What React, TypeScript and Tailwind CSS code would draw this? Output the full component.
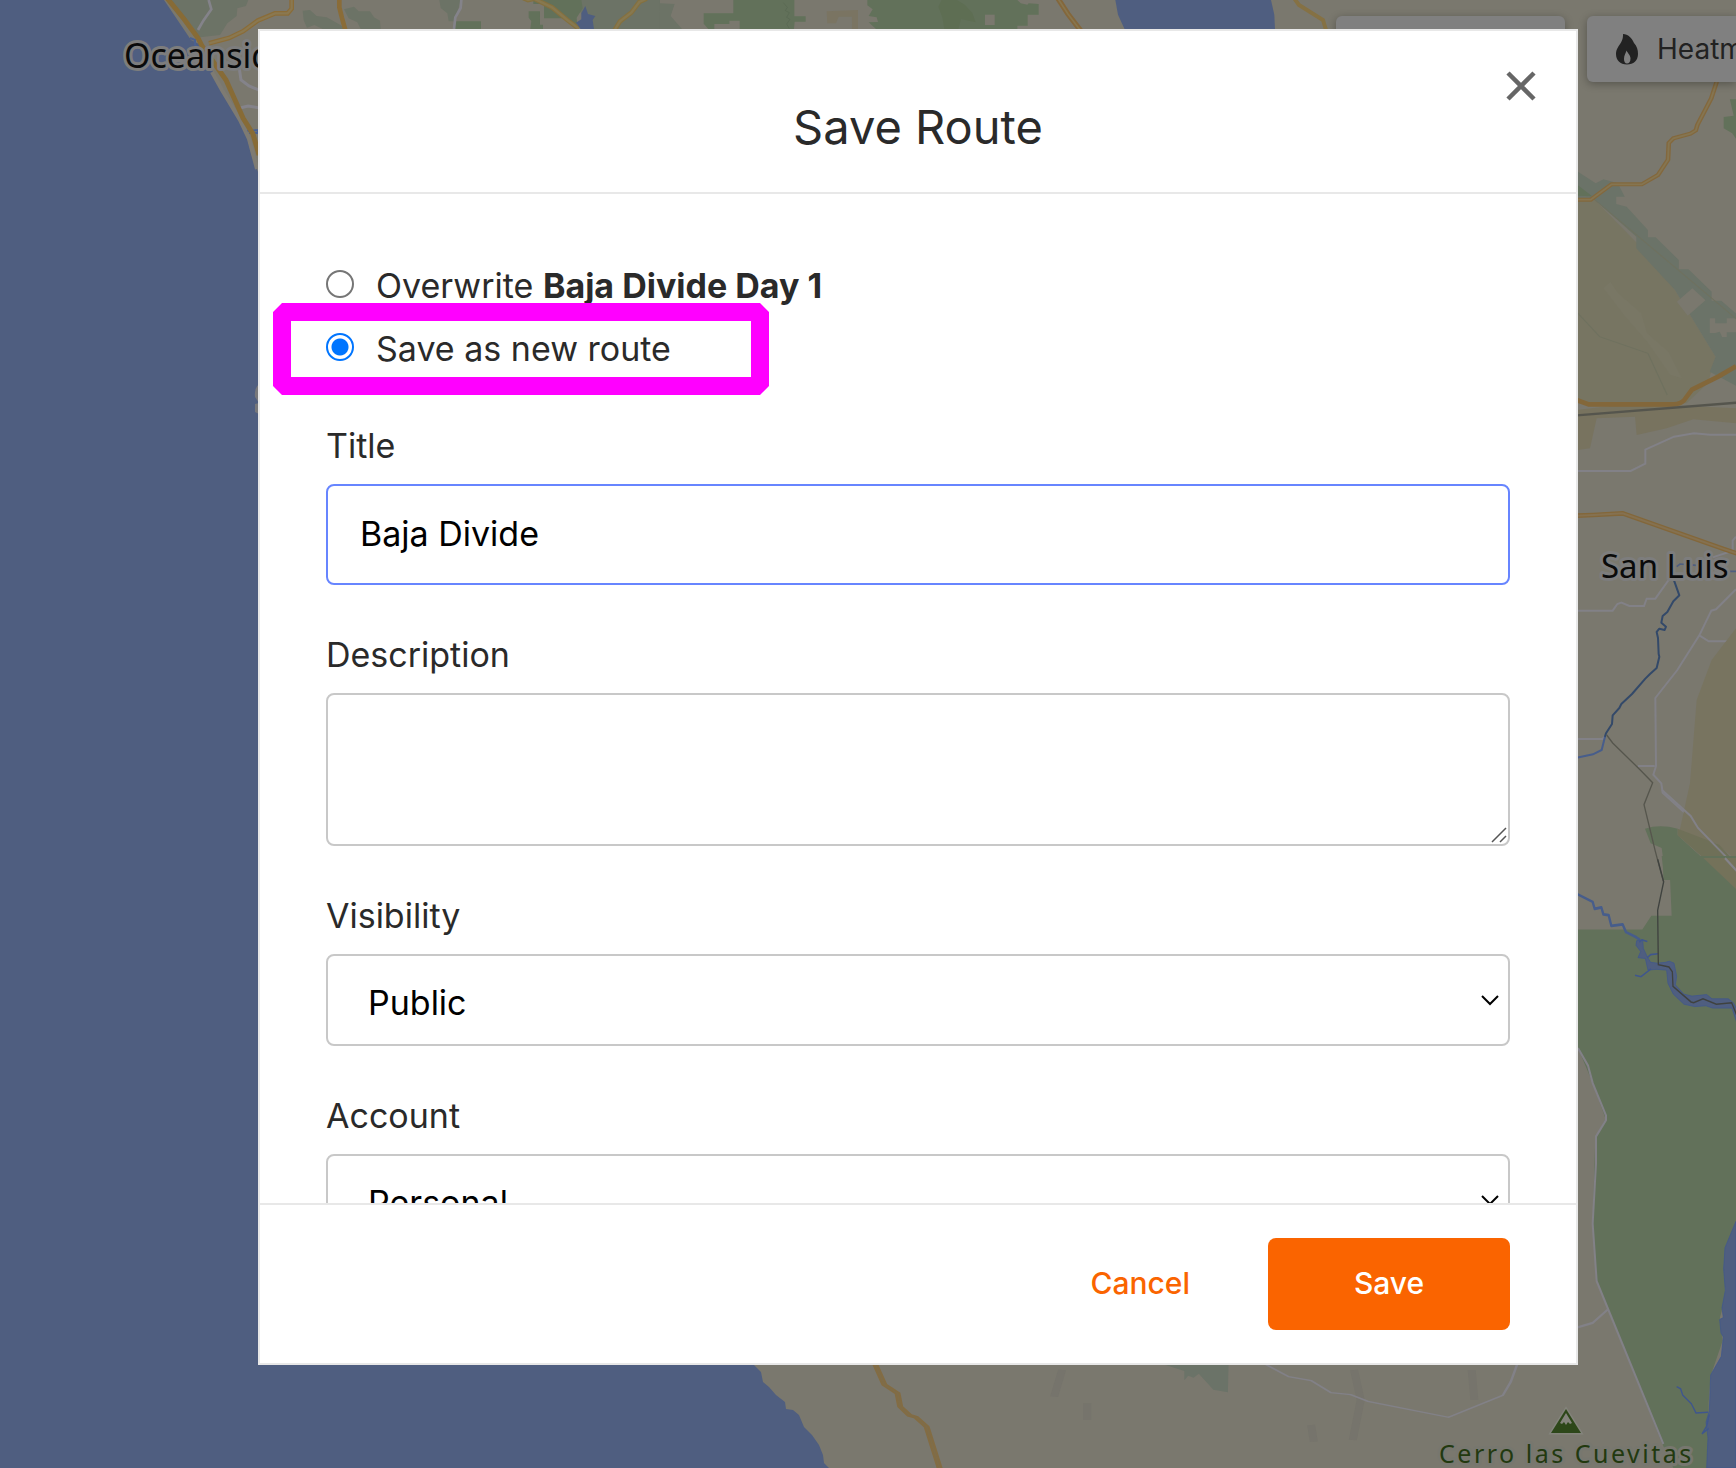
import { useState } from 'react';
import type { ReactNode } from 'react';

const fieldClass =
  'block w-full rounded-lg border-2 border-[#c8c8c8] bg-white text-[34px] leading-10 text-black outline-none';

const radioClass =
  'mb-1 size-7 appearance-none rounded-full border-2 border-[#767676] bg-white checked:border-[#0075ff] checked:bg-[radial-gradient(circle,#0075ff_8px,#fff_9px)]';

function MapBackground() {
  return (
    <svg
      className="absolute inset-0 h-full w-full"
      viewBox="0 0 1736 1468"
      preserveAspectRatio="xMidYMid slice"
      fill="none"
      aria-hidden="true"
    >
      <rect width="1736" height="1468" fill="#7a786e" />

      {/* Northern hills and forests */}
      <g transform="scale(.33333) translate(420 0)">
        <path d="M90 0H325L318 18L292 25L290 48L262 70L240 105L180 112L150 70Z" fill="#6c7366" />
        <path d="M488 32l22-2 20 18 30 4 40 22 18 13h-70l-25-12-22 8-10-22zM612 28l30-8 14 14 34 0 12 18 18 10 2 25h-60l-10-20-26-12z" fill="#6c7366" />
        <path d="M898 0h64l-6 24-14 40h-16l-4-24-20-16zM1320 0h240v87h-200l-40-52z" fill="#6c7366" />
        <path d="M945 64H1023V87H945ZM1166 34h34v40h9v13h-38l3-24-8-10zM1180 0h144l4 25-18 28 2 30-12-2-26-26h-62V12h-32z" fill="#62715a" />
        <path d="M206 0l8 28-24 34-16 28M964 0l-2 24-16 28-4 35" stroke="#84838a" strokeWidth="8" />
        <path d="M455 0v26l-12 14h-38l-52 22-44 32-42 20-60 16" stroke="#8a6c38" strokeWidth="14" />
        <path d="M455 0v26l-12 14h-38l-52 22-44 32-42 20-60 16" stroke="#8a7850" strokeWidth="7" />
        <path d="M1150-6l14 6 18-4 54 26 46 38 34 26M1520-4l-22 10-24 32-34 26-16 26" stroke="#84703f" strokeWidth="14" />
        <path d="M1150-6l14 6 18-4 54 26 46 38 34 26M1520-4l-22 10-24 32-34 26-16 26" stroke="#87784f" strokeWidth="7" />
        <path d="M598-4v26l8 32 10 36" stroke="#8a6c38" strokeWidth="14" />
        <path d="M1308 68l16-10 0-18 12-22 8 24 22 6-8 12 4 27h-40z" fill="#4f5e80" />
      </g>
      <g transform="translate(660 0) scale(.33333)">
        <path d="M0 10l44 2-12 36 34 39H0z" fill="#6c7366" />
        <path d="M220 0h183v49h34v16h-33l-2 22H239V62h-31v10h-45v15h-18l-14-16V40h89zM622 0h450l10 10 20 4 4-4 30 2v32h-33v33h-31v10H648l-22-20 28-1-4-14-24-4 12-20-16-12z" fill="#62715a" />
        <path d="M370 8l12 14-6 10 12 6-8 14 10 6-10 14 8 14" stroke="#586751" strokeWidth="2" />
        <path d="M845 0l-10 20 12 32 6 35h42l8-30 44 10-10-28-22-24-24-15z" fill="#5e6e53" />
        <path d="M975 44h29v31h-29z" fill="#7a786e" />
        <path d="M500 34l94-4v57h-18V50h-40l-8 20h-26z" fill="#7a7462" />
        <path d="M1194-4l30 46 38 50" stroke="#84673b" strokeWidth="16" />
        <path d="M1194-4l30 46 38 50" stroke="#87764f" strokeWidth="5" />
        <path d="M1366 0l8 44 20 44h451l-2-44-10-44z" fill="#4f5e80" />
      </g>
      <path d="M1294-2l5 7 24 15 3 10" stroke="#857144" strokeWidth="4" />

      {/* Pacific coast */}
      <path
        d="M0 0H164L191 40L203 46L212 70L222 87L232 106L239 119L247 137L252 156L258 172V1365H754L761 1372L763 1382L769 1387L776 1395L785 1402L786 1409L793 1410L799 1415L804 1427L812 1435L819 1445L823 1455L824 1463L829 1468H0Z"
        fill="#4f5e80"
      />
      <path d="M190 38l5 2v5l4 3M247 131l11-1v3h-9" stroke="#4a6192" strokeWidth="2" />
      <path d="M212 72l10 18 18 30 9 19 8 30" stroke="#7e7b73" strokeWidth="4" />
      <path d="M238 60l3 20 8 6 10 4M240 108l8-2 12 2" stroke="#84838a" strokeWidth="3" />
      <path d="M167-2L184 19L198 38L202 46L212 60L226 80L235 100L243 118L253 134L259 155" stroke="#876b36" strokeWidth="5" />
      <path d="M259 384q-5 4-4 13l4 6M259 403l-4 1v8l4 2" fill="#77777a" />

      {/* Imperial valley */}
      <g transform="translate(1130 0) scale(.3865 .33333)">
        <path d="M1152 600L1200 597L1325 745L1410 870L1515 1070L1495 1150L1440 1210H1152Z" fill="#777562" />
        <path d="M1152 510L1205 550L1225 538L1262 550L1280 590L1258 590V612L1285 620L1340 690V712H1360L1420 780V808H1445L1505 875V902H1530L1572 945V1160L1500 1115L1515 1070L1410 870L1310 745V710L1200 597L1152 600Z" fill="#6b7368" />
        <path d="M1415 905l40-40 34 36-46 46zM1500 955h14v15h30v-15h28v42h-28v14h-12l-6-16-12 4h-14z" fill="#7a786e" />
        <path d="M1225 865l18-20 20 35 60 60 15 60 55 55 35 80-30-10-60-100-60-80z" fill="#797765" />
        <path d="M1155 935l60 75 125 50 50 125M1200 597L1572 960" stroke="#6f715f" strokeWidth="3" />
        <path d="M1158 555l38 34-38-2zM1552 298h24v132l-18-30-22-15v-34l26-4z" fill="#62715a" />
        <path d="M1518 245l-14 50-36 80-4 16-14 10-44 14-12 14-2 50-26 46-42 28h-78l-54 46h-36" stroke="#83683d" strokeWidth="12" />
        <path d="M1518 245l-14 50-36 80-4 16-14 10-44 14-12 14-2 50-26 46-42 28h-78l-54 46h-36" stroke="#857551" strokeWidth="5" />
      </g>
      <g transform="translate(1560 380) scale(.33333)">
        <path d="M50 90L220 70L528 85V130L400 118L320 145L230 165L225 110L110 115L90 205L54 210Z" fill="#78735f" />
        <path d="M50 60l36 13h256q20-2 30-12l24-32 80-40 52-30" stroke="#83673a" strokeWidth="14" />
        <path d="M50 106L530 68" stroke="#55554d" strokeWidth="7" />
        <path d="M50 273h162l44-22V209l86-39 60-10 48 4h80M50 692h108l14-20 12-4 24 10h44l8-22h26l40-56M528 628l-60 60-14 4-36 74-66 104-66 84 2 204-8 26 24 26 4 28 86 78 22 36 80 82 32 38M418 766l28 18h82M50 1077h78l8-12M234 1158h50M528 470l-10 12v30l-60 20" stroke="#828187" strokeWidth="6" />
        <path d="M528 745L455 840L410 960L390 1210L355 1370L470 1390L528 1440Z" fill="#787460" />
        <path d="M50 407l50-2 88-5 300 106 42 14" stroke="#83673a" strokeWidth="14" />
        <path d="M50 407l50-2 88-5 300 106 42 14" stroke="#857150" strokeWidth="6" />
        <path d="M255 1346Q300 1332 353 1346V1366L500 1500H310V1440L305 1404L272 1390Z" fill="#62715a" />
        <path d="M353 1346L478 1394L528 1450V1520L353 1366Z" fill="#6f7058" />
        <path d="M306 1230l86 78 22 36 80 82 40 46" stroke="#828187" strokeWidth="6" />
        <path d="M350 560l10-8 50 4M508 574h20" stroke="#4f5e80" strokeWidth="5" />
        <path d="M338 590l20 56-18 18-18 32-14 12-4 20 14 12-4 10-16-4-8 10 4 18 2 48 2 8-8 34-20 18-14 14-40 46-32 30-6 12-20 22-2 26-18 28-4 12" stroke="#334969" strokeWidth="6" strokeLinejoin="round" />
        <path d="M135 1070l-10 40-26 13-49 10" stroke="#475d8b" strokeWidth="6" />
        <path d="M140 1065l18 24 88 86 32 33-26 66 34 140 24 90" stroke="#56564d" strokeWidth="4" />
      </g>

      {/* Colorado river delta */}
      <g transform="translate(1560 860) scale(.33333 .38776)">
        <path d="M50 179H247L274 144H335L330 46L312 44L305-10H528V935L495 1000L495 1130L480 1180L488 1240L452 1330L446 1400V1568H340L306 1504L110 1086L98 940L106 714L137 668L98 575L54 485Z" fill="#62715a" />
        <path d="M430-5L528 75V-5Z" fill="#74725a" />
        <path d="M495-5l40 38" stroke="#84838a" strokeWidth="6" />
        <path d="M528 932L495 1000L491 1055L496 1110L486 1155L490 1180L479 1185L483 1220L490 1230L484 1280L452 1328L448 1420L438 1450L444 1490L440 1568H528Z" fill="#4f5e80" stroke="#3f568e" strokeWidth="2" />
        <path d="M350 1358l12 6 6 16 26 22 14 24 36-2M448 1430l-8 30-14 20 20-14" stroke="#3f568e" strokeWidth="4" />
        <path d="M52 88l46 20 6 18 20-4 6 18 16 2 8 28 34-4 10 20 28 12 14 8" stroke="#475d8b" strokeWidth="7" strokeLinejoin="round" />
        <path
          d="M230 208L248 206L250 228L262 250L272 264L292 266L316 264L328 261L342 266L350 300L346 322L372 346L396 351L440 347L456 358H505L520 368L530 384V418L516 382H458L438 376L404 378L372 372L340 346L324 318L320 284L290 282L264 284L256 254L234 252L242 236L228 220Z"
          fill="#4f5e80"
          stroke="#3f568e"
          strokeWidth="2"
        />
        <path d="M225 297l18 4 30-20M262 252l10-8 22-2M238 212l8-6 16 4" stroke="#3f568e" strokeWidth="4" />
        <path d="M293-2l18 58-18 74 2 140 32 6 10 12 2 38 54 40 8 2 28-10 40 14 46-4 16 34" stroke="#3f423f" strokeWidth="4" />
        <path d="M54 485l30 45 14 45 40 84v12l-30 42v70l-10 155 12 148 200 420M50 1206l48-12 44-34" stroke="#828187" strokeWidth="6" />
      </g>

      {/* Southern roads */}
      <g transform="translate(700 1340) scale(.6607 .33333)">
        <path d="M700 72h100l-1 85-22-8-22-48-8 12-8-6-6 14v-28z" fill="#6b7368" />
        <path d="M548 90l-12 80M990 90l10 90-12 120M1168 90l4 90M925 255l4 50M586 190v50" stroke="#72706a" strokeWidth="12" opacity=".5" />
        <path d="M265 72l14 62 20 26 4 40 14 26 10 6 16 28 20 126" stroke="#836c43" strokeWidth="9" />
        <path d="M265 72l14 62 20 26 4 40 14 26 10 6 16 28 20 126" stroke="#7f6d49" strokeWidth="3" />
        <path d="M855 72l36 38 34 12 30 36 30 6 26 20 122 48 82-66 12-40 10-54" stroke="#828187" strokeWidth="4" />
      </g>

      <path d="M1566 1409L1581 1433H1551Z" fill="#2d4719" stroke="#83837b" strokeWidth="3" paintOrder="stroke" />
      <path d="M1566 1413l6 10-2 1-2-2-2 3-2-3-2 2-2-1z" fill="#83837b" />

      <g
        className="font-['Noto_Sans',sans-serif] [paint-order:stroke]"
        stroke="#7d7d7d"
        strokeWidth="6"
        strokeLinejoin="round"
        fill="#0a0a0a"
      >
        <text x="124" y="68" className="text-[34px]">Oceanside</text>
        <text x="1601" y="578" className="text-[33px]">San Luis</text>
        <text x="1439" y="1463" className="text-[25px] tracking-widest" fill="#22390f" stroke="#77776f">
          Cerro las Cuevitas
        </text>
      </g>
    </svg>
  );
}

function MapToolbar() {
  return (
    <div className="absolute top-4 right-0 flex gap-[22px] text-[28px] text-[#222]">
      <button
        type="button"
        aria-label="Map type"
        className="h-[66px] w-[229px] rounded-md bg-[#808080] shadow-[0_2px_8px_rgba(0,0,0,0.3)]"
      />
      <button
        type="button"
        className="flex h-[66px] w-[149px] items-center gap-[18px] overflow-hidden rounded-l-md bg-[#808080] pl-7 whitespace-nowrap shadow-[0_2px_8px_rgba(0,0,0,0.3)]"
      >
        <svg className="h-8 w-6 shrink-0" viewBox="0 0 24 32" aria-hidden="true">
          <path
            fillRule="evenodd"
            fill="#222"
            d="M8 1C13 1 17 5 19 10C22 13 23 17 23 21C23 27.500 18.500 31.500 12 31.500C5 31.500 1 27 1 21C1 16 4 13 6 9.500C8 6 8 4 8 1ZM11.500 17.500C11 20 9 22 9 26C9 28.500 10 30.500 12 30.500C14 30.500 15.500 29 15.500 25.500C15.500 22 12.500 20 11.500 17.500Z"
          />
        </svg>
        Heatmap
      </button>
    </div>
  );
}

function Field({ id, label, children }: { id: string; label: string; children: ReactNode }) {
  return (
    <div className="mb-[50px]">
      <label htmlFor={id} className="mb-[18px] block leading-10">
        {label}
      </label>
      <div className="relative">{children}</div>
    </div>
  );
}

function SelectField({ id, label, options }: { id: string; label: string; options: string[] }) {
  return (
    <Field id={id} label={label}>
      <select id={id} className={`${fieldClass} h-[92px] appearance-none pt-1.5 pr-16 pl-10`}>
        {options.map((option) => (
          <option key={option}>{option}</option>
        ))}
      </select>
      <svg
        className="pointer-events-none absolute top-10 right-2.5 h-3 w-5"
        viewBox="0 0 20 12"
        fill="none"
        stroke="#000"
        strokeWidth="2"
        aria-hidden="true"
      >
        <path d="M2 2l8 8 8-8" />
      </svg>
    </Field>
  );
}

export default function App() {
  const [mode, setMode] = useState('new');
  const [title, setTitle] = useState('Baja Divide');

  return (
    <div className="relative h-screen overflow-hidden bg-[#4f5e80] font-['Inter',sans-serif]">
      <MapBackground />
      <MapToolbar />

      <div className="relative flex h-full pt-[29px] pr-[158px] pb-[103px] pl-[258px]">
        <div
          role="dialog"
          aria-labelledby="dialog-title"
          className="relative flex min-w-0 flex-1 flex-col border-2 border-[#e8e8e8] bg-white text-[34px] text-[#2a2a2a]"
        >
          <header className="border-b-2 border-[#e8e8e8] pt-[66px] pb-[35px] text-center">
            <h1 id="dialog-title" className="text-[47px] leading-[60px]">Save Route</h1>
            <button type="button" aria-label="Close" className="absolute top-10 right-10 text-[#666]">
              <svg className="size-[30px]" viewBox="0 0 30 30" stroke="currentColor" strokeWidth="4.500" aria-hidden="true">
                <path d="M2 2L28 28M28 2L2 28" />
              </svg>
            </button>
          </header>

          <form className="min-h-0 flex-1 overflow-y-auto px-[66px] pt-[60px] [scrollbar-width:none]">
            <div className="mb-[46px]">
              <label className="flex h-[63px] items-center gap-[22px]">
                <input
                  type="radio"
                  name="mode"
                  className={radioClass}
                  checked={mode === 'overwrite'}
                  onChange={() => setMode('overwrite')}
                />
                <span>
                  Overwrite <b className="font-bold">Baja Divide Day 1</b>
                </span>
              </label>
              <div className="relative">
                <label className="flex h-[63px] items-center gap-[22px]">
                  <input
                    type="radio"
                    name="mode"
                    className={radioClass}
                    checked={mode === 'new'}
                    onChange={() => setMode('new')}
                  />
                  <span>Save as new route</span>
                </label>
                <svg
                  className="pointer-events-none absolute -top-3.5 -left-[53px] h-[92px] w-[496px]"
                  viewBox="0 0 496 92"
                  fill="none"
                  aria-hidden="true"
                >
                  <rect x="9" y="9" width="478" height="74" stroke="#ff00ff" strokeWidth="18" strokeLinejoin="bevel" />
                </svg>
              </div>
            </div>

            <Field id="title" label="Title">
              <input
                id="title"
                type="text"
                value={title}
                onChange={(e) => setTitle(e.target.value)}
                className="block h-[101px] w-full rounded-lg border-2 border-[#6785ff] bg-white px-8 pb-0.5 text-[34px] text-black outline-none"
              />
            </Field>

            <Field id="description" label="Description">
              <textarea id="description" className={`${fieldClass} h-[153px] resize-none px-8 py-6`} />
              <svg
                className="pointer-events-none absolute right-[3px] bottom-[3px] size-4"
                viewBox="0 0 16 16"
                stroke="#555"
                strokeWidth="1.500"
                aria-hidden="true"
              >
                <path d="M1 15L15 1M9 15L15 9" />
              </svg>
            </Field>

            <SelectField id="visibility" label="Visibility" options={['Public', 'Private']} />
            <SelectField id="account" label="Account" options={['Personal']} />
          </form>

          <footer className="flex items-center justify-end border-t-2 border-[#e8e8e8] px-[66px] py-[33px] text-[30px] font-medium">
            <button type="button" className="h-[92px] px-[78px] pb-0.5 text-[#fa6400]">Cancel</button>
            <button type="button" className="h-[92px] w-[242px] rounded-lg bg-[#fa6400] pb-0.5 text-white">Save</button>
          </footer>
        </div>
      </div>
    </div>
  );
}
